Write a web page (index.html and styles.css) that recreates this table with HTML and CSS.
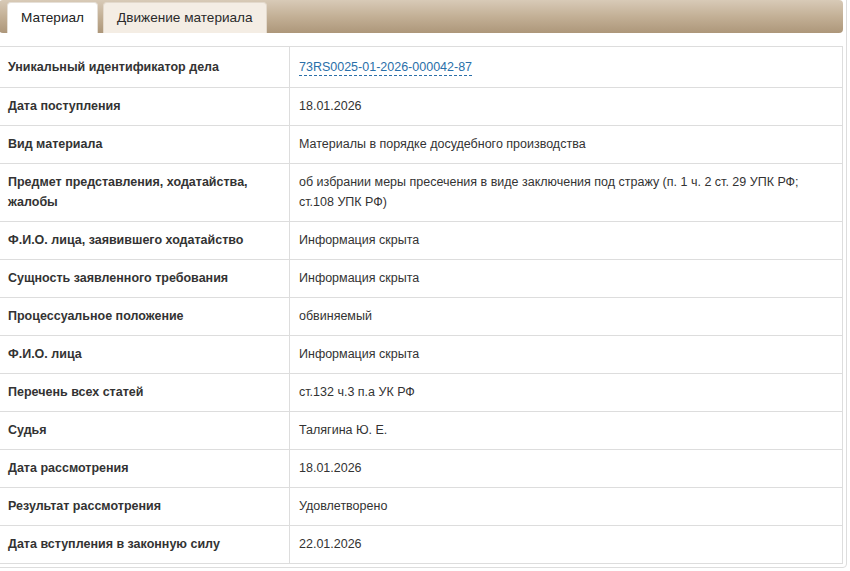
FILE: index.html
```html
<!DOCTYPE html>
<html lang="ru">
<head>
<meta charset="utf-8">
<title>Материал</title>
<link rel="stylesheet" href="styles.css">
</head>
<body>
<div class="widget">
  <ul class="tabs">
    <li class="tab active">Материал</li>
    <li class="tab">Движение материала</li>
  </ul>
  <div class="panel">
    <table class="info">
      <tr class="first"><th>Уникальный идентификатор дела</th><td><a class="uid" href="#">73RS0025-01-2026-000042-87</a></td></tr>
      <tr><th>Дата поступления</th><td>18.01.2026</td></tr>
      <tr><th>Вид материала</th><td>Материалы в порядке досудебного производства</td></tr>
      <tr><th>Предмет представления, ходатайства, жалобы</th><td>об избрании меры пресечения в виде заключения под стражу (п. 1 ч. 2 ст. 29 УПК РФ; ст.108 УПК РФ)</td></tr>
      <tr><th>Ф.И.О. лица, заявившего ходатайство</th><td>Информация скрыта</td></tr>
      <tr><th>Сущность заявленного требования</th><td>Информация скрыта</td></tr>
      <tr><th>Процессуальное положение</th><td>обвиняемый</td></tr>
      <tr><th>Ф.И.О. лица</th><td>Информация скрыта</td></tr>
      <tr><th>Перечень всех статей</th><td>ст.132 ч.3 п.а УК РФ</td></tr>
      <tr><th>Судья</th><td>Талягина Ю. Е.</td></tr>
      <tr><th>Дата рассмотрения</th><td>18.01.2026</td></tr>
      <tr><th>Результат рассмотрения</th><td>Удовлетворено</td></tr>
      <tr><th>Дата вступления в законную силу</th><td>22.01.2026</td></tr>
    </table>
  </div>
</div>
</body>
</html>
```
FILE: styles.css
```css
html, body {
  margin: 0;
  padding: 0;
  background: #ffffff;
  overflow: hidden;
}

body {
  font-family: "Liberation Sans", Arial, sans-serif;
  color: #333333;
}

.widget {
  box-sizing: border-box;
  width: 852px;
  margin: -4px 0 0 -5px;
  padding: 3px;
  border: 1px solid #dddddd;
  border-radius: 4px;
  background: #ffffff;
}

.tabs {
  list-style: none;
  margin: 0;
  padding: 2px 0 0 8px;
  height: 31px;
  display: flex;
  gap: 5px;
  border-radius: 4px;
  background: linear-gradient(to bottom, #d8cab7 0%, #c3b096 50%, #ad977a 100%);
}

.tab {
  box-sizing: border-box;
  height: 31px;
  padding: 0 13px;
  border: 1px solid #e3d9cc;
  border-bottom: 0;
  border-radius: 4px 4px 0 0;
  background: #f4ede4;
  font-size: 13.6px;
  line-height: 30px;
  color: #2b2b2b;
  white-space: nowrap;
}

.tab.active {
  background: #ffffff;
  border-color: #e6e0d8;
  color: #222222;
}

.panel {
  padding-top: 13px;
}

.info {
  width: 844px;
  border-collapse: collapse;
  font-size: 12.5px;
  line-height: 20px;
}

.info th,
.info td {
  border: 1px solid #dddddd;
  padding: 8px 9px 9px 9px;
  vertical-align: middle;
  text-align: left;
}

.info th {
  width: 272px;
  padding-left: 8px;
  font-weight: bold;
  color: #333333;
}

.info td {
  color: #333333;
}

.info .first th,
.info .first td {
  padding-top: 10px;
  padding-bottom: 10px;
}

.uid {
  padding-bottom: 1px;
  color: #2a6fa9;
  text-decoration: none;
  border-bottom: 1px dashed #2a6fa9;
}
```
